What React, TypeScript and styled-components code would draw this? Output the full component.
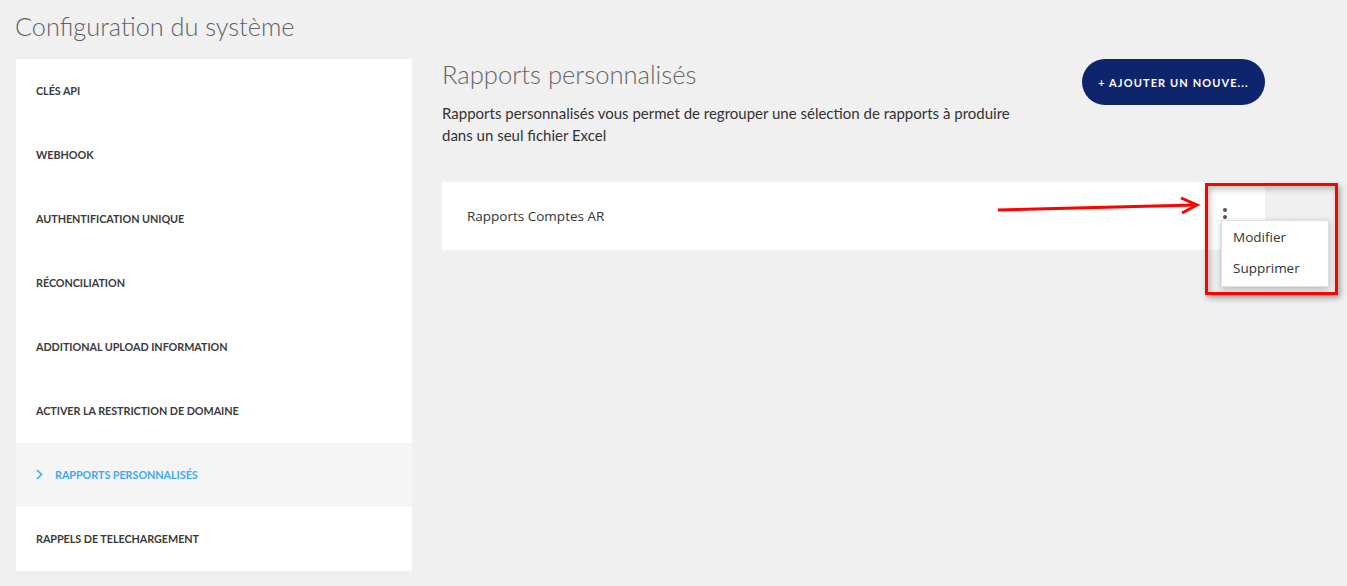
import React from "react";
import styled, { createGlobalStyle } from "styled-components";

const Global = createGlobalStyle`
  html, body { margin: 0; padding: 0; background: #f0f0f0; }
  body { font-family: "Lato", "Liberation Sans", sans-serif; color: #333; }
  * { box-sizing: border-box; }
`;

const Page = styled.div`
  position: relative;
  width: 1347px;
  height: 586px;
  padding: 11px 16px 0 16px;
  overflow: hidden;
`;

const PageTitle = styled.h1`
  margin: 0 0 0 -1px;
  font-size: 25.3px;
  font-weight: 300;
  color: #5f6368;
  line-height: 30px;
  height: 48px;
`;

const Layout = styled.div`
  display: flex;
  gap: 30px;
  align-items: flex-start;
`;

const Sidebar = styled.nav`
  width: 396px;
  background: #fff;
  display: flex;
  flex-direction: column;
`;

const NavItem = styled.div<{ $active?: boolean }>`
  height: 64px;
  display: flex;
  align-items: center;
  gap: 12px;
  padding-left: 20px;
  padding-bottom: 2px;
  background: ${(p) => (p.$active ? "#f5f5f5" : "#fff")};
  color: ${(p) => (p.$active ? "#3fa9f5" : "#3a3a3a")};
  font-size: 10.8px;
  font-weight: 700;
  text-transform: uppercase;
  letter-spacing: -0.05px;
`;

const Main = styled.main`
  width: 823px;
  display: flex;
  flex-direction: column;
`;

const HeaderRow = styled.div`
  display: flex;
  justify-content: space-between;
  align-items: flex-start;
`;

const HeaderText = styled.div`
  display: flex;
  flex-direction: column;
`;

const SectionTitle = styled.h2`
  margin: 0;
  font-size: 25.6px;
  font-weight: 300;
  color: #666;
  line-height: 30px;
`;

const Description = styled.p`
  margin: 13px 0 0 0;
  width: 600px;
  font-size: 15px;
  line-height: 22px;
  color: #333;
`;

const AddButton = styled.button`
  height: 46px;
  width: 183px;
  border: none;
  border-radius: 23px;
  background: #0e246c;
  color: #fff;
  font-family: "Lato", sans-serif;
  font-weight: 700;
  font-size: 11px;
  letter-spacing: 1.1px;
  padding: 0 10px;
  white-space: nowrap;
`;

const ReportCard = styled.div`
  margin-top: 36px;
  height: 68px;
  background: #fff;
  display: flex;
  align-items: center;
  justify-content: space-between;
  padding: 0 0 0 25px;
  position: relative;
`;

const ReportName = styled.span`
  font-family: "Open Sans", sans-serif;
  font-size: 13.5px;
  color: #333;
`;

const KebabWrap = styled.div`
  position: relative;
  width: 60px;
  height: 68px;
`;

const Kebab = styled.div`
  position: absolute;
  left: 18px;
  top: 26px;
  display: flex;
  flex-direction: column;
  gap: 3px;
`;

const Dot = styled.span`
  width: 4px;
  height: 4px;
  border-radius: 50%;
  background: #555;
`;

const Menu = styled.div`
  position: absolute;
  left: 16px;
  top: 38px;
  width: 108px;
  background: #fff;
  border: 1px solid #e0e0e0;
  box-shadow: 0 2px 6px rgba(0, 0, 0, 0.25);
  padding: 1px 0 2px 0;
  z-index: 3;
`;

const MenuItem = styled.div`
  font-family: "Open Sans", sans-serif;
  font-size: 13.5px;
  color: #333;
  height: 31px;
  line-height: 31px;
  padding-left: 11px;
`;

const Highlight = styled.div`
  position: absolute;
  left: 1205px;
  top: 183px;
  width: 133px;
  height: 112px;
  border: 3px solid #ff0000;
  box-shadow: 2px 3px 6px rgba(0, 0, 0, 0.35), inset 2px 3px 6px rgba(0, 0, 0, 0.25);
  z-index: 4;
`;

const Arrow = styled.svg`
  position: absolute;
  left: 995px;
  top: 195px;
  z-index: 4;
`;

const Chevron = () => (
  <svg width="7" height="11" viewBox="0 0 7 11">
    <path d="M1 1 L5.5 5.5 L1 10" stroke="#3fa9f5" strokeWidth="1.6" fill="none" />
  </svg>
);

const items = [
  "Clés API",
  "Webhook",
  "Authentification unique",
  "Réconciliation",
  "Additional upload information",
  "Activer la restriction de domaine",
  "Rapports personnalisés",
  "Rappels de telechargement",
];

export default function App() {
  return (
    <Page>
      <Global />
      <PageTitle>Configuration du système</PageTitle>
      <Layout>
        <Sidebar>
          {items.map((t, i) => (
            <NavItem key={t} $active={i === 6}>
              {i === 6 && <Chevron />}
              <span>{t}</span>
            </NavItem>
          ))}
        </Sidebar>
        <Main>
          <HeaderRow>
            <HeaderText>
              <SectionTitle>Rapports personnalisés</SectionTitle>
              <Description>
                Rapports personnalisés vous permet de regrouper une sélection de rapports à produire dans un seul fichier Excel
              </Description>
            </HeaderText>
            <AddButton>+ AJOUTER UN NOUVE...</AddButton>
          </HeaderRow>
          <ReportCard>
            <ReportName>Rapports Comptes AR</ReportName>
            <KebabWrap>
              <Kebab>
                <Dot />
                <Dot />
                <Dot />
              </Kebab>
              <Menu>
                <MenuItem>Modifier</MenuItem>
                <MenuItem>Supprimer</MenuItem>
              </Menu>
            </KebabWrap>
          </ReportCard>
        </Main>
      </Layout>
      <Arrow width="210" height="24" viewBox="0 0 210 24">
        <path d="M3 15 L200 10" stroke="#ff0000" strokeWidth="3" fill="none" />
        <path d="M186 3 L202 10 L187 18" stroke="#ff0000" strokeWidth="3" fill="none" strokeLinejoin="miter" />
      </Arrow>
      <Highlight />
    </Page>
  );
}
